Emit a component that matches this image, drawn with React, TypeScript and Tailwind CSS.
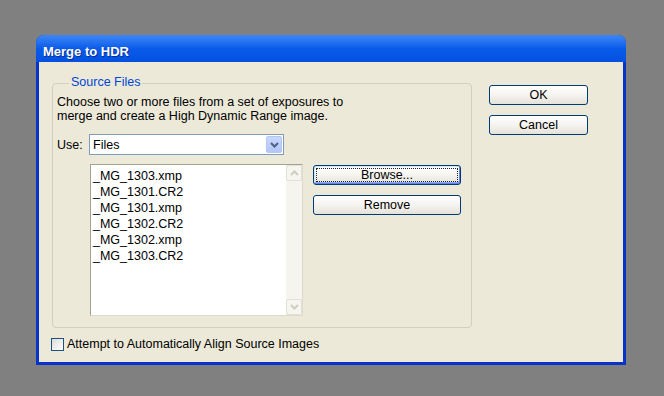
import React from 'react'

const files = ['_MG_1303.xmp', '_MG_1301.CR2', '_MG_1301.xmp', '_MG_1302.CR2', '_MG_1302.xmp', '_MG_1303.CR2']

interface BtnProps {
  label: string
  focused?: boolean
  className?: string
}

const XpButton: React.FC<BtnProps> = ({ label, focused, className }) => (
  <button
    className={`flex rounded-[3px] border border-[#003C74] bg-gradient-to-b from-white via-[#F5F4F0] to-[#E4E2D9] ${
      focused ? 'shadow-[inset_1px_1px_0_#CEE7FF,inset_-1px_-1px_0_#6982EE,inset_0_-2px_0_#8CA9F0]' : ''
    } ${className ?? ''}`}
  >
    <span
      className={`m-[2px] flex flex-1 items-center justify-center border border-dotted leading-[14px] ${
        focused ? 'border-[#222]' : 'border-transparent'
      }`}
    >
      {label}
    </span>
  </button>
)

const Chevron: React.FC<{ up?: boolean; color: string; width?: number }> = ({ up, color, width = 2 }) => (
  <svg width="9" height="6" viewBox="0 0 9 6">
    <path d={up ? 'M1 5 L4.5 1.5 L8 5' : 'M1 1 L4.5 4.5 L8 1'} fill="none" stroke={color} strokeWidth={width} />
  </svg>
)

const ScrollArrow: React.FC<{ up?: boolean }> = ({ up }) => (
  <div className="flex h-[16px] w-[16px] items-center justify-center rounded-[2px] border border-[#E3E1D6] bg-[#F6F5EF]">
    <Chevron up={up} color="#CFCDBF" />
  </div>
)

export default function App() {
  return (
    <div className="h-[396px] w-[664px] bg-[#808080] pl-[36px] pt-[35px] font-['Liberation_Sans',Arial,sans-serif] text-[12.5px] text-black">
      <div className="flex h-[330px] w-[590px] flex-col overflow-hidden rounded-t-[8px] bg-[#0733C9]">
        <div className="h-[27px] shrink-0 bg-gradient-to-b from-[#3C87F6] via-[#0A5BEA] to-[#0550DF] pl-[7px] pt-[10px] text-[13px] leading-[13px] font-bold text-white [text-shadow:1px_1px_0_#0A2C9A]">
          Merge to HDR
        </div>
        <div className="mx-[3px] mb-[3px] flex flex-1 bg-[#ECE9D8]">
          {/* left column */}
          <div className="flex flex-col pl-[13px] pt-[21px]">
            <div className="relative h-[245px] w-[420px] rounded-[4px] border border-[#D0D0BF] pl-[4px] pt-[11px]">
              <span className="absolute left-[16px] top-[-9px] bg-[#ECE9D8] px-[2px] leading-[14px] text-[#0046D5]">
                Source Files
              </span>
              <p className="leading-[14px]">
                Choose two or more files from a set of exposures to
                <br />
                merge and create a High Dynamic Range image.
              </p>
              <div className="mt-[11px] flex items-center">
                <span className="w-[32px] leading-[14px]">Use:</span>
                <div className="flex h-[21px] w-[195px] items-center border border-[#7F9DB9] bg-white pl-[3px]">
                  <span className="leading-[14px]">Files</span>
                  <div className="ml-auto mr-[1px] flex h-[17px] w-[16px] items-center justify-center rounded-[2px] border border-[#B1C6F5] bg-gradient-to-b from-[#C9D8FC] to-[#B2C6F6]">
                    <Chevron color="#4D6185" />
                  </div>
                </div>
              </div>
              <div className="mt-[9px] flex gap-[10px] pl-[33px]">
                <div className="flex h-[152px] w-[213px] border border-t-[#A5A390] border-l-[#A5A390] border-r-[#DCDACB] border-b-[#DCDACB] bg-white">
                  <ul className="flex-1 pl-[2px] pt-[3px]">
                    {files.map((f) => (
                      <li key={f} className="leading-[16px]">
                        {f}
                      </li>
                    ))}
                  </ul>
                  <div className="flex w-[16px] flex-col bg-[#F5F4EE]">
                    <ScrollArrow up />
                    <div className="flex-1" />
                    <ScrollArrow />
                  </div>
                </div>
                <div className="mt-[1px] flex flex-col gap-[10px]">
                  <XpButton label="Browse..." focused className="h-[20px] w-[148px]" />
                  <XpButton label="Remove" className="h-[20px] w-[148px]" />
                </div>
              </div>
            </div>
            <label className="ml-[-1px] mt-[9px] flex items-center gap-[3px]">
              <span className="h-[13px] w-[13px] border border-[#1C5180] bg-gradient-to-br from-[#DCDCD7] to-white" />
              <span className="leading-[14px]">Attempt to Automatically Align Source Images</span>
            </label>
          </div>
          {/* right column */}
          <div className="ml-[17px] flex flex-col gap-[10px] pt-[23px]">
            <XpButton label="OK" className="h-[20px] w-[99px]" />
            <XpButton label="Cancel" className="h-[20px] w-[99px]" />
          </div>
        </div>
      </div>
    </div>
  )
}
